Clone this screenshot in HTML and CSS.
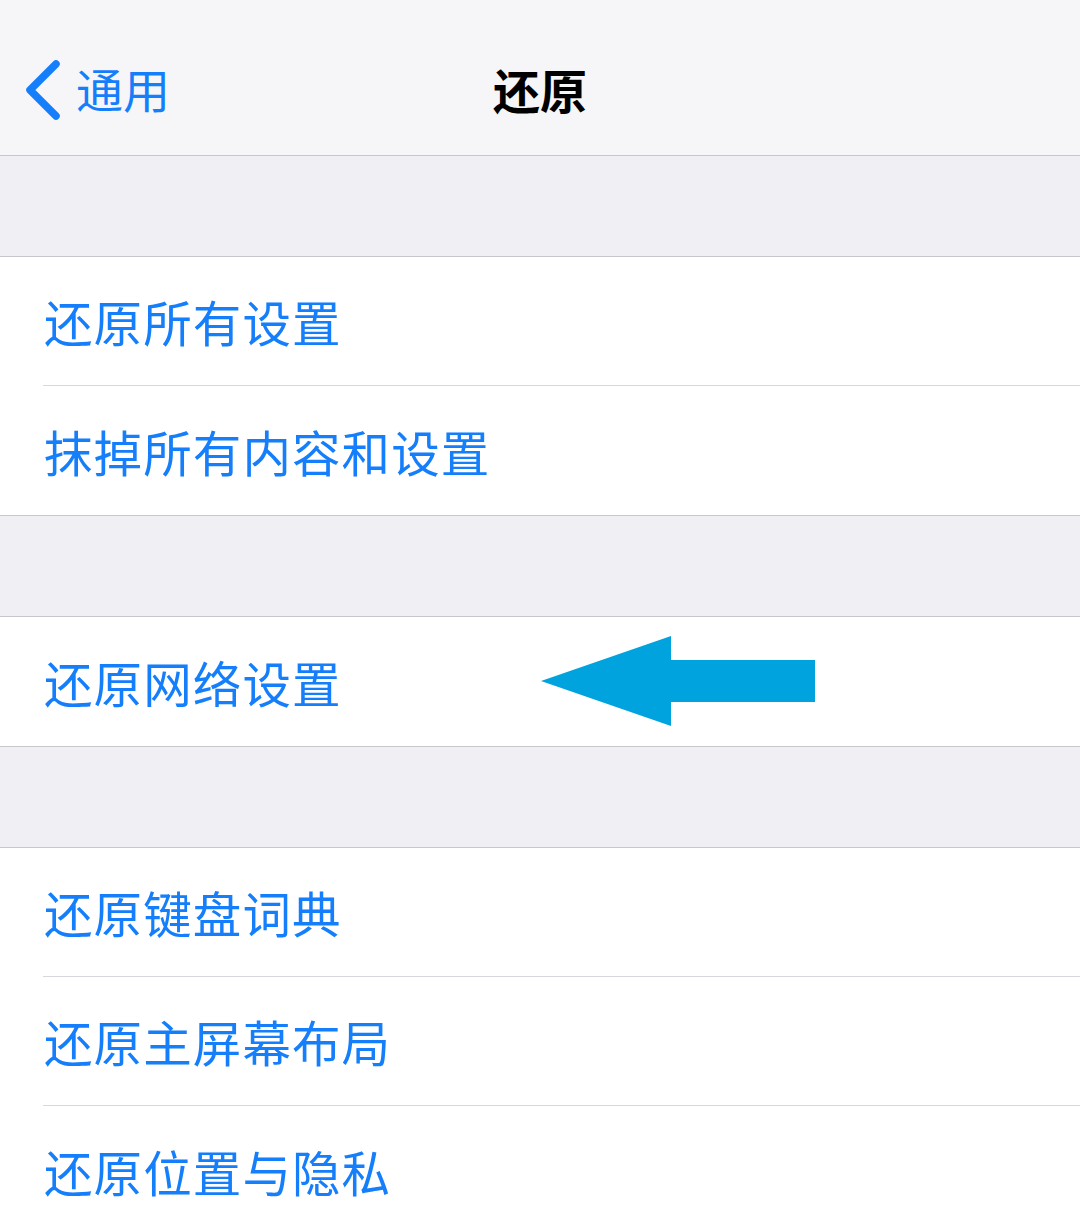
FILE: index.html
```html
<!DOCTYPE html>
<html lang="zh-CN">
<head>
  <meta charset="UTF-8" />
  <meta name="viewport" content="width=device-width, initial-scale=1.0"/>
  <title>还原</title>
  <link rel="stylesheet" href="styles.css">
</head>
<body>
  <header class="navbar">
    <a class="back" href="#">
      <svg class="chevron" width="38" height="62" viewBox="0 0 38 62">
        <path d="M32 5 L6 31 L32 57" fill="none" stroke="currentColor" stroke-width="7.5" stroke-linecap="round" stroke-linejoin="round"/>
      </svg>
      <span>通用</span>
    </a>
    <h1 class="title">还原</h1>
    <div></div>
  </header>

  <div class="gap"></div>
  <ul class="group">
    <li class="cell"><span class="cell-inner">还原所有设置</span></li>
    <li class="cell"><span class="cell-inner">抹掉所有内容和设置</span></li>
  </ul>

  <div class="gap"></div>
  <ul class="group">
    <li class="cell">
      <span class="cell-inner">还原网络设置</span>
      <svg class="pointer" width="276" height="90" viewBox="0 0 276 90">
        <polygon points="0,45 130,0 130,24 274,24 274,66 130,66 130,90" fill="#00a3de"/>
      </svg>
    </li>
  </ul>

  <div class="gap"></div>
  <ul class="group">
    <li class="cell"><span class="cell-inner">还原键盘词典</span></li>
    <li class="cell"><span class="cell-inner">还原主屏幕布局</span></li>
    <li class="cell"><span class="cell-inner">还原位置与隐私</span></li>
  </ul>
</body>
</html>
```

FILE: styles.css
```css
:root {
  --ios-blue: #157efb;
  --nav-bg: #f6f6f8;
  --group-bg: #efeff4;
  --hairline: #c8c7cc;
}

body {
  margin: 0;
  font-family: "Noto Sans CJK SC", "Noto Sans", sans-serif;
  background-color: var(--group-bg);
  height: 1227px;
  overflow: hidden;
}

.navbar {
  box-sizing: border-box;
  height: 156px;
  padding-top: 24px;
  background-color: var(--nav-bg);
  border-bottom: 1px solid var(--hairline);
  display: grid;
  grid-template-columns: 1fr auto 1fr;
  align-items: center;
}

.back {
  display: flex;
  align-items: center;
  gap: 14px;
  padding-left: 24px;
  color: var(--ios-blue);
  text-decoration: none;
  font-size: 47px;
  line-height: 1;
}

.back span {
  margin-top: -4px;
}

.title {
  margin: 0;
  font-size: 47px;
  font-weight: bold;
  color: #000;
  line-height: 1;
  margin-top: -2px;
}

.gap {
  height: 100px;
}

.group {
  list-style: none;
  margin: 0;
  padding: 0;
  background-color: white;
  border-top: 1px solid var(--hairline);
  border-bottom: 1px solid var(--hairline);
}

.cell {
  padding-left: 43px;
  position: relative;
}

.cell-inner {
  box-sizing: border-box;
  display: flex;
  align-items: center;
  height: 129px;
  padding-left: 1px;
  border-bottom: 1px solid #d8d8dc;
  color: var(--ios-blue);
  font-size: 48.5px;
  letter-spacing: 1.1px;
}

.cell:last-child .cell-inner {
  border-bottom: none;
}

.pointer {
  position: absolute;
  left: 541px;
  top: 19px;
}
```
